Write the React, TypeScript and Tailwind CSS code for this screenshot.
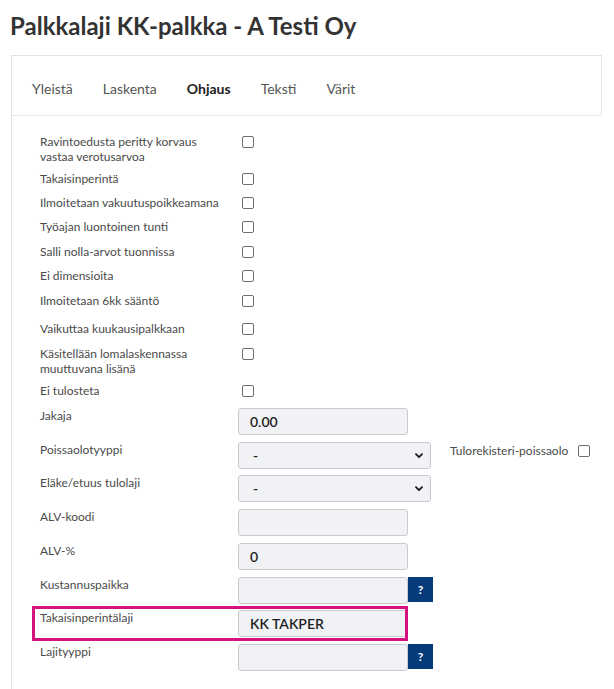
import React from "react";

const Checkbox = () => (
  <div className="w-[12px] h-[12px] border border-[#6f6f6f] rounded-[2px] bg-white shrink-0" />
);

const Chevron = () => (
  <svg width="8" height="6" viewBox="0 0 8 6" className="shrink-0">
    <path d="M1 1.2 L4 4.2 L7 1.2" fill="none" stroke="#1a1a1a" strokeWidth="1.8" strokeLinecap="round" strokeLinejoin="round" />
  </svg>
);

const checkRows: { label: string[]; h: string }[] = [
  { label: ["Ravintoedusta peritty korvaus", "vastaa verotusarvoa"], h: "h-[37px]" },
  { label: ["Takaisinperintä"], h: "h-[24px]" },
  { label: ["Ilmoitetaan vakuutuspoikkeamana"], h: "h-[24px]" },
  { label: ["Työajan luontoinen tunti"], h: "h-[25px]" },
  { label: ["Salli nolla-arvot tuonnissa"], h: "h-[24px]" },
  { label: ["Ei dimensioita"], h: "h-[25px]" },
  { label: ["Ilmoitetaan 6kk sääntö"], h: "h-[28px]" },
  { label: ["Vaikuttaa kuukausipalkkaan"], h: "h-[25px]" },
  { label: ["Käsitellään lomalaskennassa", "muuttuvana lisänä"], h: "h-[37px]" },
  { label: ["Ei tulosteta"], h: "h-[25px]" },
];

const Input = ({ value }: { value?: string }) => (
  <div className="w-[170px] h-[27px] bg-[#f1f2f5] border border-[#c9cacf] rounded-[3px] flex items-center pl-[11px] text-[14px] font-semibold text-[#1e1e1e]">
    {value}
  </div>
);

const Select = () => (
  <div className="w-[193px] h-[27px] bg-[#f1f2f5] border border-[#c9cacf] rounded-[3px] flex items-center justify-between pl-[14px] pr-[7px] text-[14px] font-semibold text-[#1e1e1e]">
    <span>-</span>
    <Chevron />
  </div>
);

const Help = () => (
  <div className="w-[25px] h-[25px] bg-[#053b7a] text-white text-[12px] font-bold flex items-center justify-center">?</div>
);

export default function App() {
  return (
    <div className="min-h-[689px] bg-white font-['Lato','Noto_Sans',sans-serif] text-[#4a4a4a]">
      <h1 className="pl-[10px] pt-[11px] h-[55px] text-[24px] leading-[30px] font-bold text-[#333]">
        Palkkalaji KK-palkka - A Testi Oy
      </h1>
      <div className="ml-[11px] mr-[12px] border-l border-t border-[#e2e2e2]">
        <div className="h-[60px] flex items-center pt-[6px] gap-[30px] pl-[20px] border-b border-r border-[#e6e6e6] text-[14px] text-[#555]">
          <span>Yleistä</span>
          <span>Laskenta</span>
          <span className="font-bold text-[#222]">Ohjaus</span>
          <span>Teksti</span>
          <span>Värit</span>
        </div>
        <div className="pl-[28px] pt-[18px] text-[12px] leading-[15px]">
          {checkRows.map((r, i) => (
            <div key={i} className={`flex items-start ${r.h}`}>
              <div className="w-[198px]">
                {r.label.map((l, j) => (
                  <div key={j}>{l}</div>
                ))}
              </div>
              <div className="ml-[4px] mt-[2px]">
                <Checkbox />
              </div>
            </div>
          ))}

          <div className="flex items-start h-[34px]">
            <div className="w-[198px]">Jakaja</div>
            <Input value="0.00" />
          </div>
          <div className="flex items-start h-[33px]">
            <div className="w-[198px]">Poissaolotyyppi</div>
            <Select />
            <div className="ml-[19px] mt-[1px] flex items-center gap-[10px]">
              <span>Tulorekisteri-poissaolo</span>
              <Checkbox />
            </div>
          </div>
          <div className="flex items-start h-[34px]">
            <div className="w-[198px]">Eläke/etuus tulolaji</div>
            <Select />
          </div>
          <div className="flex items-start h-[34px]">
            <div className="w-[198px]">ALV-koodi</div>
            <Input />
          </div>
          <div className="flex items-start h-[34px]">
            <div className="w-[198px]">ALV-%</div>
            <Input value="0" />
          </div>
          <div className="flex items-start h-[33px]">
            <div className="w-[198px]">Kustannuspaikka</div>
            <Input />
            <Help />
          </div>
          <div className="relative flex items-start h-[34px]">
            <div className="w-[198px]">Takaisinperintälaji</div>
            <Input value="KK TAKPER" />
            <div className="absolute left-[-8px] top-[-4px] w-[376px] h-[35px] border-[3px] border-[#d5137f] pointer-events-none" />
          </div>
          <div className="flex items-start h-[45px]">
            <div className="w-[198px]">Lajityyppi</div>
            <Input />
            <Help />
          </div>
        </div>
      </div>
    </div>
  );
}
